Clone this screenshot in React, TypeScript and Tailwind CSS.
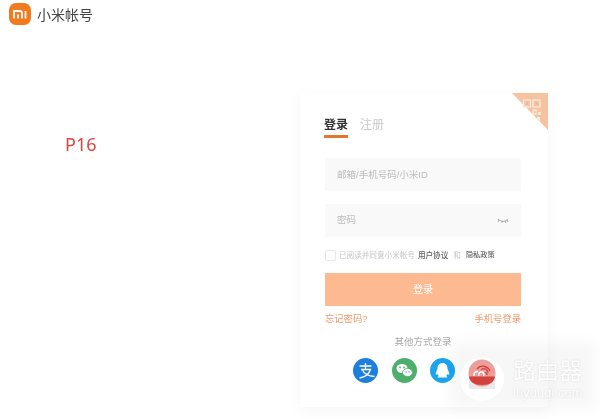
const font = { fontFamily: '"Liberation Sans", "Noto Sans CJK SC", sans-serif' }

const MiLogo = () => (
  <svg width="22" height="22" viewBox="0 0 22 22">
    <rect x="0" y="0" width="22" height="22" rx="7" fill="#f27a1f" />
    <path d="M5 15.5V8h5.5A2.5 2.5 0 0 1 13 10.5v5M9 11.5v4M16.5 8v7.5" fill="none" stroke="#fff" strokeWidth="1.8" />
  </svg>
)

const QrCorner = () => (
  <svg className="absolute top-0 right-0" width="36" height="37" viewBox="0 0 36 37">
    <polygon points="0,0 36,0 36,37" fill="#f6c3a0" />
    <g fill="none" stroke="#fbeade" strokeWidth="1.3">
      <rect x="11.5" y="7" width="7" height="7" />
      <rect x="21" y="7" width="7" height="7" />
      <rect x="21" y="17" width="3" height="4" />
    </g>
    <rect x="14" y="9.5" width="2" height="2" fill="#e9b4b0" />
    <rect x="23.5" y="9.5" width="2" height="2" fill="#e9b4b0" />
    <rect x="26" y="19" width="3" height="3" fill="#fbeade" />
    <rect x="25" y="24" width="3" height="4" fill="#fbeade" />
  </svg>
)

const Alipay = () => (
  <svg width="25" height="25" viewBox="0 0 25 25">
    <circle cx="12.5" cy="12.5" r="12.5" fill="#1d7fdc" />
    <path d="M6.5 8h12M12.5 5v6M8 11.5h9.5c-1.500 4.500-5.500 7.500-11 8.500M9.500 12c2 4.500 6 6 12 6.500" fill="none" stroke="#fff" strokeWidth="1.3" />
  </svg>
)

const Wechat = () => (
  <svg width="25" height="25" viewBox="0 0 25 25">
    <circle cx="12.5" cy="12.5" r="12.5" fill="#4caf6b" />
    <ellipse cx="10" cy="10.5" rx="5.5" ry="4.5" fill="#fff" />
    <ellipse cx="15.5" cy="14.5" rx="5" ry="4" fill="#fff" stroke="#4caf6b" strokeWidth="0.8" />
    <circle cx="8" cy="9.5" r="0.9" fill="#4caf6b" />
    <circle cx="12" cy="9.5" r="0.9" fill="#4caf6b" />
    <circle cx="14" cy="14" r="0.7" fill="#4caf6b" />
    <circle cx="17" cy="14" r="0.7" fill="#4caf6b" />
  </svg>
)

const QQ = () => (
  <svg width="25" height="25" viewBox="0 0 25 25">
    <circle cx="12.5" cy="12.5" r="12.5" fill="#1ca5ee" />
    <path d="M12.5 5c-3.500 0-5 2.500-5 5.500 0 1-1.800 3.500-1.800 5.500 0 1 .6 1 1.800 0 .4 1 .8 1.500 1.300 2-1 .5-1.500 1-1 1.500h9.400c.5-.5 0-1-1-1.500.5-.5.900-1 1.300-2 1.200 1 1.800 1 1.800 0 0-2-1.800-4.500-1.800-5.500 0-3-1.500-5.500-5-5.500z" fill="#fff" />
  </svg>
)

const LuyouqiBadge = () => (
  <svg width="44" height="44" viewBox="0 0 44 44">
    <circle cx="22" cy="22" r="22" fill="#fff" />
    <rect x="9" y="19" width="26" height="13" rx="1" fill="#e9e9e9" />
    <circle cx="22" cy="16" r="13.5" fill="#ec9e9a" />
    <path d="M9 19.5h26c-.6 5-5 8.500-13 8.500s-12.400-3.500-13-8.500z" fill="#d4403a" />
    <path d="M14 19c-.5-3 1-4.500 4-4.500M19 19c-1-3 1-4.500 3-4 2 .5 2.500 2.500 1.500 4" fill="none" stroke="#fff" strokeWidth="1.4" />
    <path d="M17 12c3-4 10-4 13 2M21 13c2-2 6-2 7 2.500M25 16c1-1 2 0 2 2" fill="none" stroke="#d4403a" strokeWidth="1.3" />
  </svg>
)

export default function App() {
  return (
    <div className="relative w-[600px] h-[419px] overflow-hidden bg-white" style={font}>
      <div className="blur-[0.6px]">
        <header className="h-[28px] pl-[9px] pt-[3px] flex items-start gap-[6px]">
          <MiLogo />
          <span className="text-[14px] leading-[24px] text-[#444]">小米帐号</span>
        </header>

        <main className="flex pt-[65px]">
          <div className="w-[300px] pl-[65px] pt-[40px]">
            <span className="block text-[18px] leading-[22px] text-[#e0453c]" style={{ fontFamily: '"Noto Sans", sans-serif' }}>P16</span>
          </div>

          <section className="relative w-[248px] h-[314px] bg-white shadow-[0_4px_14px_rgba(0,0,0,0.04)] pl-[25px] pr-[27px] pt-[26px]">
            <QrCorner />
            <div className="flex gap-3 -ml-px h-[19px]">
              <div className="w-6 h-[19px] border-b-[3px] border-[#e3772c] text-[12px] leading-[13px] font-bold text-[#333] whitespace-nowrap">登录</div>
              <div className="text-[12px] leading-[13px] text-[#c9c9c9] whitespace-nowrap">注册</div>
            </div>

            <div className="mt-[20px] h-[33px] bg-[#f9f9f9] pl-3 text-[9.5px] leading-[33px] text-[#bbb]">邮箱/手机号码/小米ID</div>

            <div className="mt-[13px] h-[33px] bg-[#f9f9f9] pl-3 pr-3 flex items-center justify-between text-[9.5px] text-[#bbb]">
              <span>密码</span>
              <svg width="12" height="6" viewBox="0 0 12 6" fill="none" stroke="#999" strokeWidth="0.8">
                <path d="M1 1c3 3 7 3 10 0M2 2L1 4M5 3v2M8 3l1 2M10 2l1 2" />
              </svg>
            </div>

            <div className="mt-[13px] h-[11px] flex items-center text-[7.6px] text-[#c4c4c4] whitespace-nowrap">
              <div className="w-[11px] h-[11px] border border-[#e8e8e8] rounded-[2px] mr-[3px]" />
              <span>已阅读并同意小米帐号</span>
              <span className="ml-[3px] text-[#666] font-medium">用户协议</span>
              <span className="mx-[5px]">和</span>
              <span className="text-[7.2px] text-[#666] font-medium">隐私政策</span>
            </div>

            <div className="mt-[12px] h-[33px] bg-[#fdb98f] text-white text-[10px] leading-[33px] text-center">登录</div>

            <div className="mt-[7px] flex justify-between text-[9.3px] leading-[12px] text-[#ee9a6a]">
              <span>忘记密码?</span>
              <span>手机号登录</span>
            </div>

            <div className="mt-[11px] text-center text-[9.5px] leading-[12px] text-[#aaa]">其他方式登录</div>

            <div className="mt-[10px] ml-[28px] flex gap-[13.5px]">
              <Alipay />
              <Wechat />
              <QQ />
            </div>
          </section>
        </main>
      </div>

      {/* site watermark */}
      <div className="absolute left-[450px] top-[342px] w-[145px] h-[66px] bg-black/[0.03] blur-[6px]" />
      <div className="absolute left-[460px] top-[357px]">
        <LuyouqiBadge />
      </div>
      <div className="absolute left-[513px] top-[357px] text-white [text-shadow:0_0_2px_rgba(0,0,0,0.15)]">
        <div className="text-[23px] leading-[28px]">路由器</div>
        <div className="text-[13px] leading-[15px]">luyouqi.com</div>
      </div>
    </div>
  )
}
